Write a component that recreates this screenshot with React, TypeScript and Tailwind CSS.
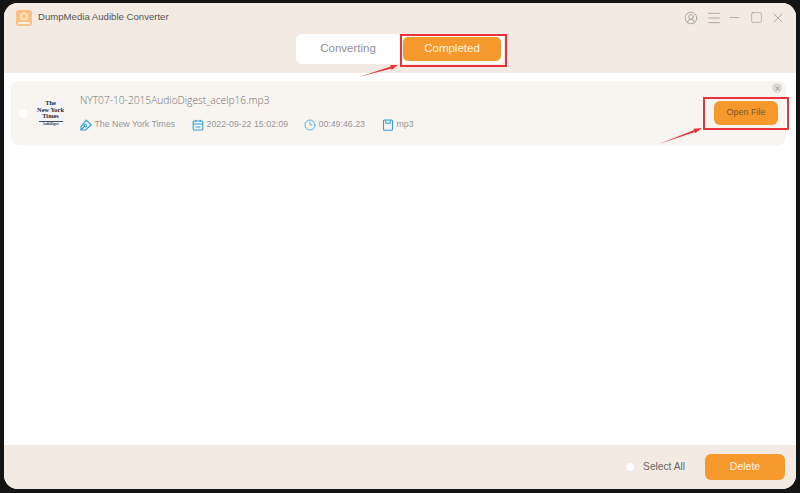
import { CircleUserRound, Menu, Minus, Square, X, Clock3 } from "lucide-react";

function PenIcon() {
  return (
    <svg width="12" height="12" viewBox="0 0 12 12" fill="none" stroke="#2e9fe0" strokeWidth="1.2">
      <path d="M.8 8 6 1.2l5.2 4.6-5.6 5.2H1.2z" />
      <path d="M.8 11.4 3.8 8" />
      <circle cx="5.2" cy="6.6" r="1.3" />
    </svg>
  );
}

function CalendarIcon() {
  return (
    <svg width="12" height="12" viewBox="0 0 12 12" fill="none" stroke="#2e9fe0" strokeWidth="1.1">
      <rect x="1.2" y="2" width="9.6" height="9" rx="1" />
      <path d="M1.2 5h9.6M3.8.8v2.2M8.2.8v2.2M3.5 8h5" />
    </svg>
  );
}

function FileIcon() {
  return (
    <svg width="12" height="12" viewBox="0 0 12 12" fill="none" stroke="#2e9fe0" strokeWidth="1.1">
      <rect x="1.5" y="1" width="9" height="10.2" rx="1" />
      <path d="M3.8 1v3.2h4.4V1" />
    </svg>
  );
}

function AppLogo() {
  return (
    <svg width="16" height="16" viewBox="0 0 16 16" fill="none">
      <rect width="16" height="16" rx="3" fill="#fbc184" />
      <circle cx="8" cy="6.4" r="4" fill="#fde3c2" />
      <circle cx="8" cy="6.4" r="2.2" fill="#fbc184" />
      <rect x="2" y="12" width="12" height="2" rx="1" fill="#fff2e0" />
    </svg>
  );
}

const META = [
  { icon: <PenIcon />, text: "The New York Times", width: "w-[112px]" },
  { icon: <CalendarIcon />, text: "2022-09-22 15:02:09", width: "w-[112px]" },
  { icon: <Clock3 size={12} color="#2e9fe0" strokeWidth={1.5} />, text: "00:49:46.23", width: "w-[78px]" },
  { icon: <FileIcon />, text: "mp3", width: "w-[40px]" },
];

export default function App() {
  return (
    <div className="relative h-[493px] w-[800px] overflow-hidden bg-[#141414] pt-[3px] pr-[4px] pb-[4px] pl-[4px] font-['Liberation_Sans',Arial,sans-serif]">
      <div className="flex h-full flex-col overflow-hidden rounded-[14px] bg-white">
        {/* шапка */}
        <div className="h-[70px] shrink-0 bg-[#f3ebe3]">
          <div className="flex h-[29px] items-center justify-between pr-[10px] pl-[12px]">
            <div className="flex items-center gap-[6px]">
              <AppLogo />
              <span className="text-[9.6px] text-[#555]">DumpMedia Audible Converter</span>
            </div>
            <div className="flex items-center text-[#8a8a8a]">
              <CircleUserRound size={14} strokeWidth={1.1} />
              <Menu size={16} strokeWidth={1} className="ml-[8px]" />
              <Minus size={15} strokeWidth={1} className="ml-[4.5px]" />
              <Square size={13} strokeWidth={1} className="ml-[8px]" />
              <X size={16} strokeWidth={1} className="ml-[7.5px]" />
            </div>
          </div>
          <div className="mt-[2px] flex justify-center">
            <div className="flex h-[30px] w-[208px] items-center rounded-[6px] bg-white pr-[3px]">
              <div className="flex-1 pr-[3px] text-center text-[11.5px] text-[#8f8f8f]">Converting</div>
              <div className="flex h-[24px] w-[98px] items-center justify-center rounded-[5px] bg-[#f5992d] text-[11.5px] text-[#fff3e2]">
                Completed
              </div>
            </div>
          </div>
        </div>

        {/* список */}
        <div className="flex-1 pt-[8px] pr-[10px] pl-[7px]">
          <div className="relative flex h-[64px] items-center rounded-[8px] bg-[#f8f5f1] pr-[8px] pl-[8px]">
            <div className="h-[9px] w-[9px] rounded-full bg-white" />
            <div className="ml-[9px] flex h-[27px] w-[27px] flex-col items-center justify-center overflow-hidden bg-[#f4f4f6] font-['Liberation_Serif',serif] text-[6.4px] leading-[6.4px] font-bold text-[#1f2a44]">
              <span>The</span>
              <span className="whitespace-nowrap">New York</span>
              <span>Times</span>
              <span className="my-[1px] h-px w-[24px] shrink-0 bg-[#44506e]" />
              <span className="text-[3px] leading-[3px] whitespace-nowrap">AudioDigest</span>
            </div>
            <div className="ml-[16px] flex-1">
              <div className="mt-[-1px] font-['Open_Sans',sans-serif] text-[10.2px] leading-[14px] font-light text-[#6f6f6f]">
                NYT07-10-2015AudioDigest_acelp16.mp3
              </div>
              <div className="mt-[11px] flex items-center">
                {META.map((m) => (
                  <div key={m.text} className={`flex items-center gap-[2.5px] ${m.width}`}>
                    {m.icon}
                    <span className="text-[8.8px] text-[#979797]">{m.text}</span>
                  </div>
                ))}
              </div>
            </div>
            <button className="mt-[-1px] h-[24px] w-[64px] rounded-[6px] bg-[#f5992d] text-[9px] text-[#7c5a2c]">
              Open File
            </button>
            <div className="absolute top-[2px] right-[4px] flex h-[10px] w-[10px] items-center justify-center rounded-full bg-[#dedbd7]">
              <X size={7} color="#666" strokeWidth={2} />
            </div>
          </div>
        </div>

        {/* низ */}
        <div className="flex h-[44px] shrink-0 items-center justify-end bg-[#f3ebe3] pr-[11px]">
          <div className="h-[8px] w-[8px] rounded-full bg-white" />
          <span className="mr-[20px] ml-[9px] text-[10.2px] text-[#666]">Select All</span>
          <button className="h-[26px] w-[80px] rounded-[6px] bg-[#f5992d] text-[10.5px] text-[#fff3e2]">Delete</button>
        </div>
      </div>

      {/* пометки на скриншоте */}
      <div className="absolute top-[34px] left-[400px] h-[33px] w-[107px] border-[2px] border-[#e8323c]" />
      <div className="absolute top-[97px] left-[703px] h-[33px] w-[86px] border-[2px] border-[#e8323c]" />
      <svg className="absolute top-0 left-0" width="800" height="493" fill="#e8323c">
        <path d="M359 77 390.7 66.5 390.3 65.1 398 65 391.7 69.9 391.3 68.5z" />
        <path d="M659 144 694.1 130.1 693.6 128.7 702 128 695.4 133.3 694.9 131.9z" />
      </svg>
    </div>
  );
}
